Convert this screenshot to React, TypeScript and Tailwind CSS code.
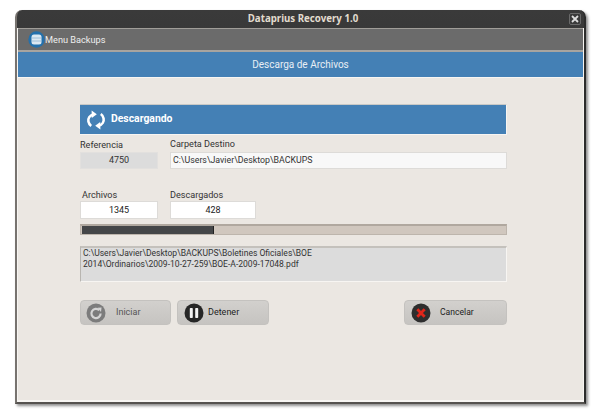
import React from "react";

const font = { fontFamily: 'Roboto, "Noto Sans", sans-serif' };
const titleFont = { fontFamily: '"Noto Sans", sans-serif' };

function Btn({ icon, label, className, textClass }: { icon: React.ReactNode; label: string; className: string; textClass: string }) {
  return (
    <div className={`h-[25px] flex items-center rounded-[4px] border border-[#c4c2bf] bg-gradient-to-b from-[#d2d0cd] to-[#c6c4c1] ${className}`}>
      {icon}
      <span className={`leading-none ${textClass}`}>{label}</span>
    </div>
  );
}

export default function App() {
  return (
    <div className="w-[600px] h-[416px] bg-white pt-[10px] pl-[15px] overflow-hidden" style={font}>
      <div className="w-[571px] h-[394px] flex flex-col rounded-t-[7px] bg-gradient-to-b from-[#3a3a3a] to-[#1e1e1e] shadow-[2px_2px_3px_rgba(0,0,0,0.45)] border-b-2 border-r-2 border-l-2 border-l-[#77736f] border-r-[#2c2c2c] border-b-[#55524f]">
        {/* title bar */}
        <div className="relative h-[18px] shrink-0 flex items-center justify-center pl-[5px]">
          <span className="text-[9.7px] font-bold leading-none text-[#e2dccf]" style={titleFont}>Dataprius Recovery 1.0</span>
          <div className="absolute right-[3px] top-[3px] w-[12px] h-[12px] rounded-[2px] border border-[#6a6a6a] bg-[#3a3a3a] flex items-center justify-center">
            <svg width="8" height="8" viewBox="0 0 8 8"><path d="M1 1 L7 7 M7 1 L1 7" stroke="#dddddd" strokeWidth="1.8" /></svg>
          </div>
        </div>
        {/* body */}
        <div className="flex-1 flex flex-col bg-[#ebe7e2] border-l border-r border-b-2 border-[#f7f5f2] min-h-0">
          <div className="h-[24px] shrink-0 flex items-center pl-[10px] bg-[#6b6b6b] border-t border-b-2 border-t-[#a09d98] border-b-[#a8a49f]">
            <svg width="17" height="17" viewBox="0 0 17 17">
              <circle cx="8.5" cy="8.5" r="8.2" fill="#2470ab" />
              <rect x="3.5" y="3.5" width="10" height="10" rx="2.5" fill="#dce8f1" />
              <path d="M3.5 7H13.5M3.5 10H13.5" stroke="#8fb5d2" strokeWidth="0.8" />
            </svg>
            <span className="text-[9.2px] leading-none text-[#eeeeee]">Menu Backups</span>
          </div>
          <div className="h-[26px] shrink-0 flex items-center justify-center bg-[#4480b5] border-b border-[#f7f5f2]">
            <span className="text-[10px] leading-none text-[#e8eef4]">Descarga de Archivos</span>
          </div>

          <div className="ml-[62px] w-[427px] flex flex-col">
            <div className="mt-[26px] h-[31px] flex items-center pl-[6px] bg-[#4480b5] border-t border-[#c9c9c6] border-b border-b-[#f7f5f2] border-r border-r-[#f7f5f2]">
              <svg width="20" height="20" viewBox="0 0 20 20" fill="none" stroke="#ffffff" strokeWidth="2.6">
                <path d="M7.5 4.2 C3.6 5.4 1.8 8.6 2.4 11.6 C2.8 13.6 3.8 15 5.2 16" />
                <path d="M5.6 0.6 L10.8 4.2 L5.8 8 Z" fill="#ffffff" stroke="none" />
                <path d="M12.5 15.8 C16.4 14.6 18.2 11.4 17.6 8.4 C17.2 6.4 16.2 5 14.8 4" />
                <path d="M14.4 19.4 L9.2 15.8 L14.2 12 Z" fill="#ffffff" stroke="none" />
              </svg>
              <span className="ml-[5px] text-[10.4px] font-bold leading-none text-white">Descargando</span>
            </div>

            <div className="mt-[3px] flex">
              <div className="w-[78px] mr-[12px]">
                <div className="h-[12px] mt-[1px] text-[9.1px] leading-[12px] text-[#333333]">Referencia</div>
                <div className="h-[17px] mt-[1px] flex items-center justify-center bg-[#dcdcdc] border border-[#e2e0de] text-[9px] leading-none text-[#333333]">4750</div>
              </div>
              <div className="w-[337px]">
                <div className="h-[12px] text-[9.1px] leading-[12px] text-[#333333]">Carpeta Destino</div>
                <div className="h-[17px] mt-[2px] flex items-center pl-[2px] bg-[#f8f8f8] border border-[#dddbd8] text-[8.8px] leading-none text-[#333333]">C:\Users\Javier\Desktop\BACKUPS</div>
              </div>
            </div>

            <div className="mt-[20px] flex">
              <div className="w-[78px] mr-[12px]">
                <div className="h-[12px] pl-[2px] text-[9.1px] leading-[12px] text-[#333333]">Archivos</div>
                <div className="h-[18px] flex items-center justify-center bg-white border border-[#dddbd8] text-[9px] leading-none text-[#222222]">1345</div>
              </div>
              <div className="w-[86px]">
                <div className="h-[12px] text-[9.1px] leading-[12px] text-[#333333]">Descargados</div>
                <div className="h-[18px] flex items-center justify-center bg-white border border-[#dddbd8] text-[9px] leading-none text-[#222222]">428</div>
              </div>
            </div>

            <div className="mt-[5px] h-[11px] bg-[#d0c7be] border border-[#bdb5ac] border-t-2 border-t-[#b0a89f]">
              <div className="h-full w-[132px] ml-[1px] bg-[#444648] border-r border-[#222222]" />
            </div>

            <div className="mt-[11px] h-[36px] pl-[2px] bg-[#dcdcdc] border-t-2 border-l border-t-[#c4c1bc] border-l-[#b8b5b0] border-r border-r-[#f7f5f2] border-b border-b-[#f7f5f2] text-[8.55px] leading-[11px] text-[#333333]">
              C:\Users\Javier\Desktop\BACKUPS\Boletines Oficiales\BOE
              <br />
              2014\Ordinarios\2009-10-27-259\BOE-A-2009-17048.pdf
            </div>

            <div className="mt-[18px] flex">
              <Btn
                className="w-[91px] pl-[5px] mr-[6px]"
                textClass="ml-[10px] text-[9px] text-[#555555]"
                label="Iniciar"
                icon={
                  <svg width="20" height="20" viewBox="0 0 20 20">
                    <circle cx="10" cy="10" r="9.5" fill="#7c7c7c" />
                    <path d="M13.2 7.2 A4.6 4.6 0 1 0 14.6 10.5" fill="none" stroke="#d4d4d4" strokeWidth="2.2" />
                    <path d="M11.5 4.8 L15.6 4.6 L15 9 Z" fill="#d4d4d4" />
                  </svg>
                }
              />
              <Btn
                className="w-[92px] pl-[6px]"
                textClass="ml-[4px] text-[9px] text-[#222222]"
                label="Detener"
                icon={
                  <svg width="20" height="20" viewBox="0 0 20 20">
                    <circle cx="10" cy="10" r="9.5" fill="#262626" />
                    <rect x="5.8" y="5" width="3" height="10" rx="0.8" fill="#f2f2f2" />
                    <rect x="11.2" y="5" width="3" height="10" rx="0.8" fill="#f2f2f2" />
                  </svg>
                }
              />
              <Btn
                className="w-[103px] pl-[6px] ml-[135px]"
                textClass="ml-[9px] text-[8.6px] text-[#222222]"
                label="Cancelar"
                icon={
                  <svg width="20" height="20" viewBox="0 0 20 20">
                    <circle cx="10" cy="10" r="9.5" fill="#2e2e2e" />
                    <path d="M6.3 6.3 L13.7 13.7 M13.7 6.3 L6.3 13.7" stroke="#e0261a" strokeWidth="2.8" />
                  </svg>
                }
              />
            </div>
          </div>
        </div>
      </div>
    </div>
  );
}
